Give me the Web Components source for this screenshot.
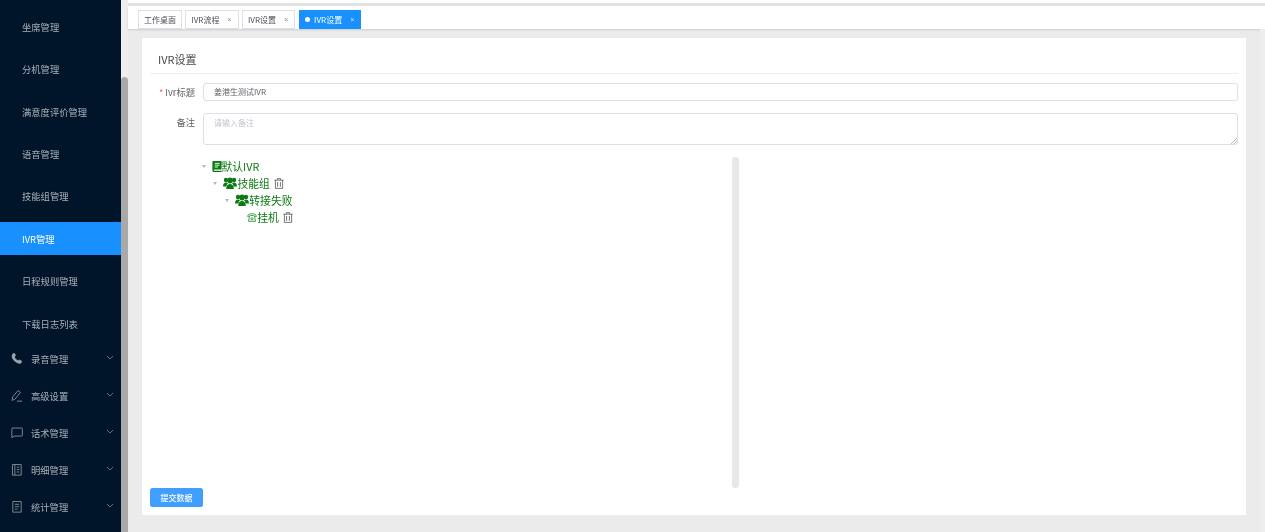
<!DOCTYPE html>
<html lang="zh">
<head>
<meta charset="utf-8">
<title>IVR设置</title>
<style>
html,body{margin:0;height:532px;overflow:hidden;background:#ebebeb;font-family:"Noto Sans CJK SC","Liberation Sans",sans-serif}
</style>
</head>
<body>
<app-shell>
  <side-nav slot="nav">
    <nav-sub>坐席管理</nav-sub>
    <nav-sub>分机管理</nav-sub>
    <nav-sub>满意度评价管理</nav-sub>
    <nav-sub>语音管理</nav-sub>
    <nav-sub>技能组管理</nav-sub>
    <nav-sub active>IVR管理</nav-sub>
    <nav-sub>日程规则管理</nav-sub>
    <nav-sub>下载日志列表</nav-sub>
    <nav-group icon="phone">录音管理</nav-group>
    <nav-group icon="pen">高级设置</nav-group>
    <nav-group icon="chat">话术管理</nav-group>
    <nav-group icon="book">明细管理</nav-group>
    <nav-group icon="doc">统计管理</nav-group>
  </side-nav>
  <tag-bar slot="tags">
    <tag-item fixed>工作桌面</tag-item>
    <tag-item>IVR流程</tag-item>
    <tag-item>IVR设置</tag-item>
    <tag-item active>IVR设置</tag-item>
  </tag-bar>
  <ivr-card>
    <form-row label="Ivr标题" required><text-box value="姜港生测试IVR"></text-box></form-row>
    <form-row label="备注" tall><text-box multiline placeholder="请输入备注"></text-box></form-row>
    <ivr-tree slot="tree">
      <tree-row depth="0" icon="book">默认IVR</tree-row>
      <tree-row depth="1" icon="group" del>技能组</tree-row>
      <tree-row depth="2" icon="group">转接失败</tree-row>
      <tree-row depth="3" icon="tel" del>挂机</tree-row>
    </ivr-tree>
    <submit-button slot="action">提交数据</submit-button>
  </ivr-card>
</app-shell>
<script>
const def=(name,html,init)=>customElements.define(name,class extends HTMLElement{
  constructor(){super();this.attachShadow({mode:'open'}).innerHTML=html;}
  connectedCallback(){init&&init(this,this.shadowRoot);}
});
const NAV_ICONS={
 phone:'<path fill="#9aa3ad" stroke="none" d="M3 1.5 5 1 6.4 4 5 5.2C5.6 7 7 8.4 8.8 9.2L10 8l2.8 1.6-.6 2.1C11.6 12.6 10 12.8 8 12 5 10.8 3 8.5 2 6 1.6 4.5 2 2.6 3 1.5Z"/>',
 pen:'<path d="M2.2 12.2 2.8 8.6 8.6 1.6 11.2 3.7 5.4 10.8ZM7.4 13H13"/>',
 chat:'<path d="M2.6 2.2H12.4Q13.2 2.2 13.2 3V10Q13.2 10.8 12.4 10.8H4.4L2 12.6V3Q2 2.2 2.6 2.2Z"/>',
 book:'<path d="M2.6 1.6H12V13H2.6ZM5.2 1.6V13M7.2 4.4H10M7.2 7H10M7.2 9.6H10"/>',
 doc:'<path d="M3 1.6H12V13H3ZM5.2 4.6H9.8M5.2 7.2H9.8M5.2 9.8H8.2"/>'
};
const TREE_ICONS={
 book:'<svg width="10" height="11" viewBox="0 0 10 11"><path fill="#0b7a12" d="M1.2 0H9.6V8.4H2.4C1.9 8.4 1.7 8.8 1.7 9.1S1.9 9.8 2.4 9.8H9.6V11H2C.9 11 .4 10.2.4 9.2V1C.4.4.7 0 1.2 0Z"/><path stroke="#fff" stroke-width=".9" d="M2.8 2.4H7.6M2.8 4.2H7.6M2.8 6H6"/></svg>',
 group:'<svg width="14" height="12" viewBox="0 0 14 12"><g fill="#0b7a12"><circle cx="3" cy="3" r="2.2"/><circle cx="11" cy="3" r="2.2"/><path d="M0 9.4C0 6.6 1.2 5.4 3 5.4 3.9 5.4 4.6 5.7 5 6.2 4 7.2 3.6 8.2 3.6 9.4H0Z"/><path d="M14 9.4C14 6.6 12.8 5.4 11 5.4 10.1 5.4 9.4 5.7 9 6.2 10 7.2 10.4 8.2 10.4 9.4H14Z"/><ellipse cx="7" cy="3.4" rx="2.6" ry="3"/><path d="M3.2 12C3.2 8.6 4.8 7 7 7S10.8 8.6 10.8 12Z"/></g></svg>',
 tel:'<svg width="10" height="9" viewBox="0 0 10 9" fill="none" stroke="#2f9a3a" stroke-width=".9"><path d="M.5 3.4C.7 1.6 2.8.7 5 .7S9.3 1.6 9.5 3.4L7.4 4V2.8C6 2.3 4 2.3 2.6 2.8V4Z"/><path d="M2.3 4.4 1.5 8.3H8.5L7.7 4.4"/><circle cx="5" cy="5.8" r="1.1"/></svg>'
};
const TRASH='<svg width="10" height="11" viewBox="0 0 10 11" fill="none" stroke="#666" stroke-width=".9"><path d="M.3 2.2H9.7M3.4 2.2V.6H6.6V2.2M1.4 2.2V10.4H8.6V2.2M3.6 4V8.8M6.4 4V8.8"/></svg>';

def('app-shell',`<style>
:host{display:flex;width:1265px;height:532px;overflow:hidden;background:#ebebeb;filter:blur(.35px)}
.track{width:7px;flex:none;background:#eeeeee;padding-top:77px;box-sizing:border-box}
.thumb{height:455px;background:#a9a9a9;border-radius:4px 4px 0 0}
main{flex:1;min-width:0;display:flex;flex-direction:column}
.body{flex:1;min-height:0;display:flex}
.content{flex:1;min-width:0;padding:9px 14px 17px 14px;display:flex}
.strip{width:5px;flex:none;background:#eeeeee}
</style><slot name="nav"></slot><div class="track"><div class="thumb"></div></div>
<main><slot name="tags"></slot><div class="body"><div class="content"><slot></slot></div><div class="strip"></div></div></main>`);

def('side-nav',`<style>
:host{display:flex;flex-direction:column;flex:none;width:121px;height:532px;overflow:hidden;background:#001529;padding-top:10.2px;box-sizing:border-box}
</style><slot></slot>`);

def('nav-sub',`<style>
:host{display:flex;align-items:center;flex:none;height:33px;margin-bottom:9.43px;padding-left:22px;font-size:9.3px;color:#aab0b7;letter-spacing:0}
:host([active]){background:#1890ff;color:#fff}
:host(:last-of-type){margin-bottom:.3px}
</style><slot></slot>`);

def('nav-group',`<style>
:host{display:flex;align-items:center;flex:none;height:37px;font-size:9.3px;color:#aab0b7;padding-left:10px;position:relative}
svg.i{width:14px;height:14px;flex:none;margin-right:7px;fill:none;stroke:#8f98a2;stroke-width:.9}
.t{flex:1}
svg.c{width:8px;height:5px;margin-right:7px;margin-top:-3px;fill:none;stroke:#7d8691;stroke-width:.8}
</style><svg class="i" viewBox="0 0 15 15"></svg><span class="t"><slot></slot></span><svg class="c" viewBox="0 0 8 5"><path d="M1 1 4 4 7 1"/></svg>`,
(el,s)=>{s.querySelector('svg.i').innerHTML=NAV_ICONS[el.getAttribute('icon')]||'';});

def('tag-bar',`<style>
:host{display:block;flex:none;background:#fff}
.gap{height:3px;background:#e3e3e3;margin-top:3px}
.bar{height:23px;box-sizing:border-box;display:flex;align-items:center;gap:3.4px;padding:3px 0 0 10px;background:#fff;box-shadow:0 1px 2px rgba(0,0,0,.13)}
</style><div class="gap"></div><div class="bar"><slot></slot></div>`);

def('tag-item',`<style>
:host{display:inline-flex;align-items:center;height:19px;box-sizing:border-box;border:1px solid #dcdfe6;background:#fff;color:#4b4f56;font-size:8px;padding:0 5px;white-space:nowrap}
:host([active]){background:#1890ff;border-color:#1890ff;color:#fff}
.d{display:none;width:5px;height:5px;border-radius:50%;background:#fff;margin-right:4.5px}
:host([active]) .d{display:block}
.x{margin-left:7.2px;font-size:7px;color:#8a8f96;width:6px;text-align:center;font-family:"Liberation Sans",sans-serif}
:host([active]) .x{color:#d5e9ff}
:host([fixed]) .x{display:none}
</style><span class="d"></span><slot></slot><span class="x">×</span>`);

def('ivr-card',`<style>
:host{display:flex;flex-direction:column;flex:1;background:#fff;padding:0 8px 8px;box-sizing:border-box;min-width:0}
h2{margin:0;height:36px;line-height:43px;box-sizing:border-box;font-size:11px;font-weight:400;color:#4a4a4a;padding-left:8px;border-bottom:1px solid #ebeef5}
.form{padding-top:9px;display:flex;flex-direction:column;gap:12px}
.tree{flex:1;min-height:0;padding:12px 0 0 0;display:flex}
.act{flex:none}
</style><h2>IVR设置</h2><div class="form"><slot></slot></div>
<div class="tree"><slot name="tree"></slot></div><div class="act"><slot name="action"></slot></div>`);

def('form-row',`<style>
:host{display:flex;align-items:flex-start;font-size:9.3px;color:#606266}
label{width:45px;flex:none;text-align:right;margin-right:8px;line-height:18px}
b{color:#f56c6c;font-weight:400;margin-right:2px}
.f{flex:1;min-width:0}
</style><label></label><div class="f"><slot></slot></div>`,
(el,s)=>{const l=s.querySelector('label');l.innerHTML=(el.hasAttribute('required')?'<b>*</b>':'');l.append(el.getAttribute('label'));});

def('text-box',`<style>
:host{display:block;box-sizing:border-box;height:18px;border:1px solid #dcdfe6;border-radius:3px;background:#fff;font-size:8px;color:#606266;line-height:16px;padding-left:10px;position:relative}
:host([multiline]){height:32px;line-height:17px}
.ph{color:#c0c4cc}
svg{display:none;position:absolute;right:0;bottom:0}
:host([multiline]) svg{display:block}
</style><span class="v"></span><svg width="6" height="6" viewBox="0 0 6 6" stroke="#8a8a8a" stroke-width=".6"><path d="M0 6 6 0M3 6 6 3"/></svg>`,
(el,s)=>{const v=s.querySelector('.v');if(el.hasAttribute('value'))v.textContent=el.getAttribute('value');else{v.textContent=el.getAttribute('placeholder');v.className='v ph';}});

def('ivr-tree',`<style>
:host{display:flex;flex:1;min-width:0;height:331px}
.l{width:582px;flex:none;box-sizing:border-box;padding-top:.5px}
.b{width:7px;flex:none;background:#e8e8e8;border-radius:3px}
</style><div class="l"><slot></slot></div><div class="b"></div>`);

def('tree-row',`<style>
:host{display:flex;align-items:center;height:17px;font-size:10.8px;color:#0b7a12;line-height:17px;white-space:nowrap}
.c{width:0;height:0;border-left:2.5px solid transparent;border-right:2.5px solid transparent;border-top:3px solid #b4b8bd;margin-right:6px;flex:none}
.c.h{visibility:hidden}
.i{display:flex;flex:none;margin-right:0}
.d{display:flex;margin-left:4px}
</style><span class="c"></span><span class="i"></span><slot></slot><span class="d"></span>`,
(el,s)=>{const d=+el.getAttribute('depth');el.style.paddingLeft=(51.5+d*11.9)+'px';
 if(d===3)s.querySelector('.c').classList.add('h');
 s.querySelector('.i').innerHTML=TREE_ICONS[el.getAttribute('icon')];
 if(el.hasAttribute('del'))s.querySelector('.d').innerHTML=TRASH;});

def('submit-button',`<style>
:host{display:inline-flex;align-items:center;justify-content:center;width:53px;height:19px;background:#409eff;border-radius:2.5px;color:#fff;font-size:8px;font-weight:500}
</style><slot></slot>`);
</script>
</body>
</html>
